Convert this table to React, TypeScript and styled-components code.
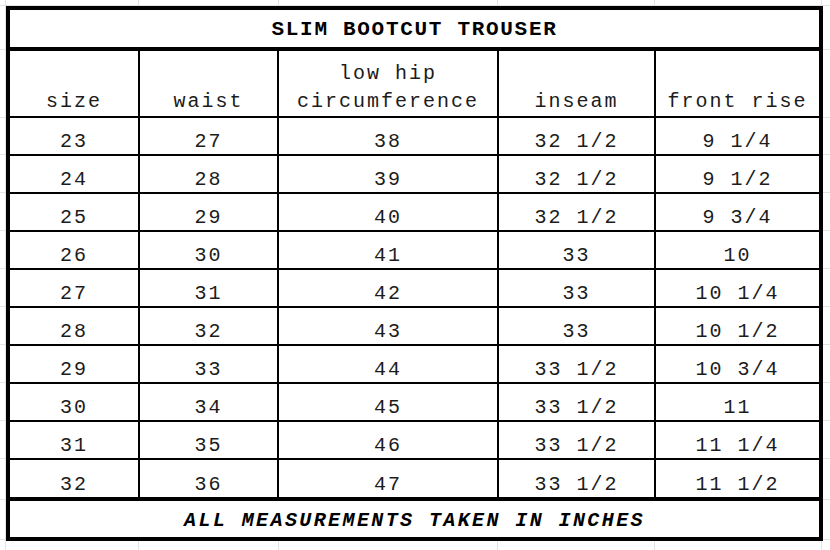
import styled, { createGlobalStyle } from 'styled-components';

const GlobalStyle = createGlobalStyle`
    html, body {
        margin: 0;
        padding: 0;
        background: #ffffff;
    }
`;

const gridColor = '#e2e3e3';
const gridCols = [5, 138, 278, 497, 654, 821];
const gridRows = [5, 49, 117, 154, 192, 230, 268, 306, 344, 382, 420, 458, 499, 539];

const gridImages = [...gridCols, ...gridRows]
    .map(() => `linear-gradient(${gridColor}, ${gridColor})`)
    .join(', ');
const gridSizes = [
    ...gridCols.map(() => '1px 100%'),
    ...gridRows.map(() => '100% 1px'),
].join(', ');
const gridPositions = [
    ...gridCols.map(x => `${x}px 0`),
    ...gridRows.map(y => `0 ${y}px`),
].join(', ');

const rows = [
    ['23', '27', '38', '32 1/2', '9 1/4'],
    ['24', '28', '39', '32 1/2', '9 1/2'],
    ['25', '29', '40', '32 1/2', '9 3/4'],
    ['26', '30', '41', '33', '10'],
    ['27', '31', '42', '33', '10 1/4'],
    ['28', '32', '43', '33', '10 1/2'],
    ['29', '33', '44', '33 1/2', '10 3/4'],
    ['30', '34', '45', '33 1/2', '11'],
    ['31', '35', '46', '33 1/2', '11 1/4'],
    ['32', '36', '47', '33 1/2', '11 1/2'],
];

const columnWidths = [130, 139, 220, 157, 163];

export default function App() {
    return (
        <>
            <GlobalStyle />
            <Sheet>
                <Table>
                    <colgroup>
                        {columnWidths.map((w, i) => (
                            <Col key={i} $w={w} />
                        ))}
                    </colgroup>
                    <tbody>
                        <tr>
                            <TitleCell colSpan={5}>SLIM BOOTCUT TROUSER</TitleCell>
                        </tr>
                        <tr>
                            <HeadCell>size</HeadCell>
                            <HeadCell>waist</HeadCell>
                            <HeadCell>low hip<br />circumference</HeadCell>
                            <HeadCell>inseam</HeadCell>
                            <HeadCell $last>front rise</HeadCell>
                        </tr>
                        {rows.map((row, r) => (
                            <tr key={r}>
                                {row.map((value, c) => (
                                    <DataCell
                                        key={c}
                                        $last={c === row.length - 1}
                                        $bottom={r === rows.length - 1}
                                    >
                                        {value}
                                    </DataCell>
                                ))}
                            </tr>
                        ))}
                        <tr>
                            <FooterCell colSpan={5}>ALL MEASUREMENTS TAKEN IN INCHES</FooterCell>
                        </tr>
                    </tbody>
                </Table>
            </Sheet>
        </>
    );
}

const Sheet = styled.div`
    width: 830px;
    height: 550px;
    box-sizing: border-box;
    padding: 6px 0 0 6px;
    overflow: hidden;
    background-color: #ffffff;
    background-image: ${gridImages};
    background-size: ${gridSizes};
    background-position: ${gridPositions};
    background-repeat: no-repeat;
`;

const Table = styled.table`
    box-sizing: border-box;
    width: 817px;
    table-layout: fixed;
    border-collapse: separate;
    border-spacing: 0;
    border: 4px solid #000;
    background: #ffffff;
    font-family: "Liberation Mono", "Courier New", monospace;
    color: #1c1c1c;

    td {
        box-sizing: border-box;
        padding: 0;
        text-align: center;
    }
`;

const Col = styled.col<{ $w: number }>`
    width: ${props => props.$w}px;
`;

const TitleCell = styled.td`
    height: 41px;
    border-bottom: 4px solid #000;
    color: #000;
    font-size: 21px;
    font-weight: 700;
    letter-spacing: 1.7px;
    line-height: 33px;
    padding-top: 3px !important;
    vertical-align: top;
`;

const HeadCell = styled.td<{ $last?: boolean }>`
    height: 67px;
    border-bottom: 2px solid #000;
    border-right: ${props => (props.$last ? 'none' : '2px solid #000')};
    font-size: 20px;
    letter-spacing: 2px;
    line-height: 28px;
    vertical-align: bottom;
`;

const DataCell = styled.td<{ $last?: boolean; $bottom?: boolean }>`
    height: ${props => (props.$bottom ? 37 : 38)}px;
    border-bottom: ${props => (props.$bottom ? 'none' : '2px solid #000')};
    border-right: ${props => (props.$last ? 'none' : '2px solid #000')};
    font-size: 20px;
    letter-spacing: 2px;
    line-height: 24px;
    vertical-align: bottom;
`;

const FooterCell = styled.td`
    height: 40px;
    border-top: 4px solid #000;
    color: #000;
    font-size: 20px;
    font-weight: 700;
    font-style: italic;
    letter-spacing: 2.4px;
    line-height: 32px;
    padding-top: 4px !important;
    vertical-align: top;
`;
